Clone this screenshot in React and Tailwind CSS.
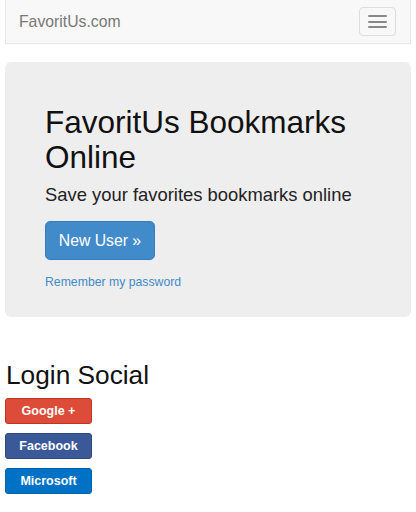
export default function App() {
  return (
    <div className="w-[416px] min-h-[512px] bg-white px-[5px] font-['Liberation_Sans',Arial,sans-serif] text-[#111]">
      {/* Navbar */}
      <div className="flex h-[44px] items-center justify-between border border-t-0 border-[#e7e7e7] bg-[#f8f8f8] pl-[13px] pr-[14px]">
        <span className="text-[15.75px] leading-[20px] text-[#777]">FavoritUs.com</span>
        <button className="flex h-[29px] w-[37px] flex-col items-center justify-center gap-[3.5px] rounded-[4px] border border-[#ddd]">
          <span className="block h-[2px] w-[19px] rounded-[1px] bg-[#888]"></span>
          <span className="block h-[2px] w-[19px] rounded-[1px] bg-[#888]"></span>
          <span className="block h-[2px] w-[19px] rounded-[1px] bg-[#888]"></span>
        </button>
      </div>

      {/* Jumbotron */}
      <div className="mt-[18px] rounded-[6px] bg-[#eee] px-[40px] pb-[26px] pt-[43px]">
        <h1 className="text-[31.5px] leading-[34.65px] text-[#111]">FavoritUs Bookmarks Online</h1>
        <p className="mt-[7.5px] text-[18.4px] leading-[26px] text-[#222]">Save your favorites bookmarks online</p>
        <div className="mt-[13px]">
          <button className="h-[39px] w-[110px] rounded-[5px] border border-[#357ebd] bg-[#428bca] text-[15.75px] text-white">
            New User »
          </button>
        </div>
        <p className="mt-[14px] text-[12.25px] leading-[17.5px] text-[#428bca]">Remember my password</p>
      </div>

      {/* Login Social */}
      <h2 className="mt-[44px] pl-[1px] text-[26.25px] leading-[29px] text-[#111]">Login Social</h2>
      <div className="mt-[8px] flex flex-col items-start gap-[9px]">
        <button className="h-[26px] w-[87px] rounded-[3px] border border-[#c23321] bg-[#dd4b39] text-[12.5px] font-bold text-white">
          Google +
        </button>
        <button className="h-[26px] w-[87px] rounded-[3px] border border-[#30487b] bg-[#3b5998] text-[12.5px] font-bold text-white">
          Facebook
        </button>
        <button className="h-[26px] w-[87px] rounded-[3px] border border-[#0063ad] bg-[#0072c6] text-[12.5px] font-bold text-white">
          Microsoft
        </button>
      </div>
    </div>
  );
}
